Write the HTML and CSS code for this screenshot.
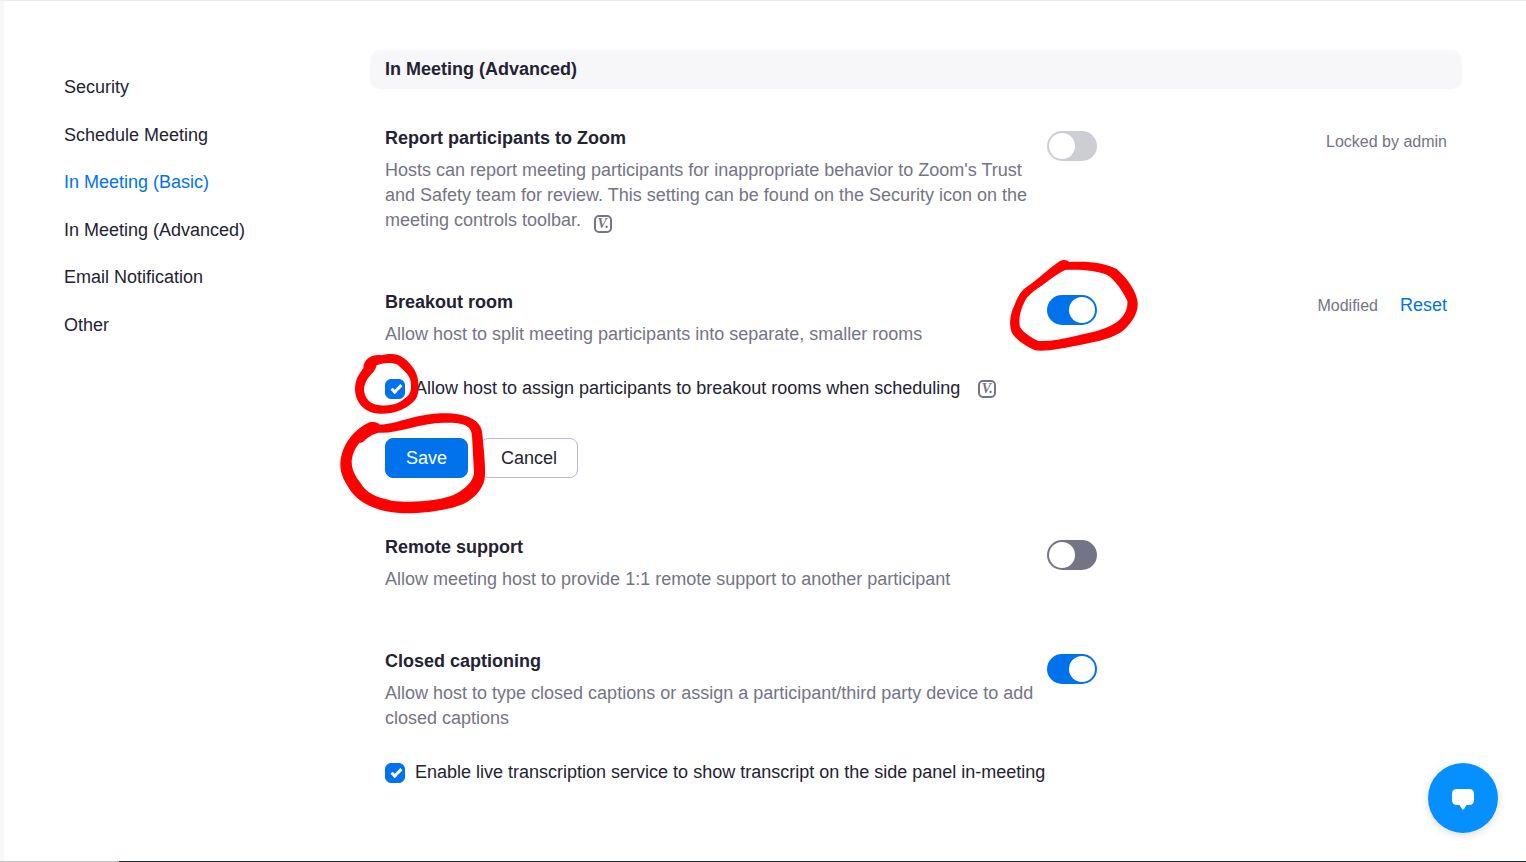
FILE: index.html
```html
<!DOCTYPE html>
<html lang="en">
<head>
<meta charset="utf-8">
<title>Meeting settings</title>
<meta name="viewport" content="width=device-width, initial-scale=1">
<link rel="stylesheet" href="styles.css">
</head>
<body>
<div class="page">
  <div class="content">
    <nav class="side-nav" aria-label="Settings sections">
      <a href="#security">Security</a>
      <a href="#schedule">Schedule Meeting</a>
      <a href="#basic" class="active">In Meeting (Basic)</a>
      <a href="#advanced">In Meeting (Advanced)</a>
      <a href="#email">Email Notification</a>
      <a href="#other">Other</a>
    </nav>
    <main class="settings">
      <h2 class="group-title" id="advanced">In Meeting (Advanced)</h2>

      <section class="setting">
        <div class="details">
          <h3 id="report-label">Report participants to Zoom</h3>
          <p class="description">Hosts can report meeting participants for inappropriate behavior to Zoom's Trust and Safety team for review. This setting can be found on the Security icon on the meeting controls toolbar. <button class="version" type="button" aria-label="Version requirements">V.</button></p>
        </div>
        <span class="switch-wrap"><input class="switch" type="checkbox" role="switch" aria-labelledby="report-label" disabled></span>
        <div class="status"><span>Locked by admin</span></div>
      </section>

      <section class="setting">
        <div class="details">
          <h3 id="breakout-label">Breakout room</h3>
          <p class="description">Allow host to split meeting participants into separate, smaller rooms</p>
          <div class="option">
            <span class="check-wrap">
              <input class="check" type="checkbox" id="assign" checked>
              <svg class="mark mark-check" viewBox="0 0 840 240" aria-hidden="true"><path d="M100 85C100 55 130 42 155 46C180 40 200 41 215 50C240 65 262 95 264 120C268 150 266 175 245 190C220 212 190 222 150 221C110 220 78 195 75 150C75 120 85 105 100 85ZM140 76C165 66 190 68 203 74C220 90 240 105 242 125C246 150 240 165 225 175C200 195 180 198 150 196C120 194 104 175 102 150C102 125 120 106 130 96Q138 86 140 76Z"/></svg>
            </span>
            <label for="assign">Allow host to assign participants to breakout rooms when scheduling</label>
            <button class="version" type="button" aria-label="Version requirements">V.</button>
          </div>
          <div class="actions">
            <span class="save-wrap">
              <button class="btn primary" type="button">Save</button>
              <svg class="mark mark-save" viewBox="0 0 840 570" aria-hidden="true"><path d="M118 250C135 246 146 252 150 257C200 256 245 228 330 223C400 220 455 238 457 285C462 340 466 370 465 405C466 440 440 475 400 495C350 515 280 524 215 523C150 518 100 502 65 460C45 430 30 405 31 375C33 325 65 275 118 250ZM145 281C200 285 270 252 340 251C400 250 424 258 426 290L432 400C432 430 395 460 360 472C310 488 240 492 185 485C140 475 110 465 90 430C72 405 65 390 65 365C68 340 80 320 89 311C105 312 106 292 145 281Z"/></svg>
            </span>
            <button class="btn" type="button">Cancel</button>
          </div>
        </div>
        <span class="switch-wrap">
          <input class="switch" type="checkbox" role="switch" aria-labelledby="breakout-label" checked>
          <svg class="mark mark-switch" viewBox="0 0 450 330" aria-hidden="true"><path d="M180 36C190 30 205 33 207 39C260 35 320 42 350 60C385 90 410 130 413 160C415 190 400 215 375 240C340 270 300 275 240 288C190 298 140 308 105 304C75 290 45 270 35 250C25 220 32 190 45 165C55 135 70 120 85 110C110 95 150 55 180 36ZM195 63C240 60 290 65 320 77C345 90 370 130 382 155C384 180 375 200 350 220C320 240 280 250 230 260C190 270 150 278 115 276C90 265 70 250 60 235C55 210 60 185 75 155C90 130 120 115 135 103C155 88 175 72 195 63Z"/></svg>
        </span>
        <div class="status"><span>Modified</span><a href="#reset">Reset</a></div>
      </section>

      <section class="setting">
        <div class="details">
          <h3 id="remote-label">Remote support</h3>
          <p class="description">Allow meeting host to provide 1:1 remote support to another participant</p>
        </div>
        <span class="switch-wrap"><input class="switch" type="checkbox" role="switch" aria-labelledby="remote-label"></span>
      </section>

      <section class="setting">
        <div class="details">
          <h3 id="caption-label">Closed captioning</h3>
          <p class="description">Allow host to type closed captions or assign a participant/third party device to add closed captions</p>
          <div class="option">
            <span class="check-wrap"><input class="check" type="checkbox" id="transcript" checked></span>
            <label for="transcript">Enable live transcription service to show transcript on the side panel in-meeting</label>
          </div>
        </div>
        <span class="switch-wrap"><input class="switch" type="checkbox" role="switch" aria-labelledby="caption-label" checked></span>
      </section>
    </main>
  </div>
  <footer class="page-edge"></footer>
</div>
<button class="chat" type="button" aria-label="Open chat">
  <svg viewBox="0 0 24 22" aria-hidden="true"><path d="M6 0H18Q23 0 23 5V11Q23 16 18 16H15.500L13 20Q12 21.500 11 20L8.500 16H6Q1 16 1 11V5Q1 0 6 0Z"/></svg>
</button>
</body>
</html>
```
FILE: styles.css
```css
* { box-sizing: border-box; }

body {
  margin: 0;
  background: #fff;
  color: #232333;
  font: 18px/25px "Liberation Sans", Arial, sans-serif;
}

h2, h3, p { margin: 0; font-size: inherit; }
button, input { font: inherit; margin: 0; }
a { color: #0073ec; text-decoration: none; }

.page {
  display: flex;
  flex-direction: column;
  min-height: 100vh;
  border-top: 1px solid #ebebed;
}

.content {
  flex: 1;
  display: flex;
  padding: 49px 64px 0 60px;
  border-left: 4px solid #f7f7fa;
}

.side-nav {
  flex: 0 0 306px;
  display: grid;
  grid-auto-rows: 1fr;
  align-items: center;
  align-self: flex-start;
  height: 285px;
  margin-top: 14px;
}
.side-nav a { color: #232333; justify-self: start; }
.side-nav .active { color: #0073ec; }

.settings { flex: 1; min-width: 0; }

.group-title {
  padding: 7px 15px;
  background: #f7f7fa;
  border-radius: 10px;
  margin-bottom: 37px;
}

.setting {
  display: grid;
  grid-template-columns: minmax(0, 1fr) 50px 350px;
  align-items: start;
  padding: 0 15px;
  margin-bottom: 57px;
}

.setting h3 { margin-bottom: 7px; }
.description { color: #747487; padding-right: 8px; }

.option {
  display: flex;
  align-items: center;
  gap: 10px;
  margin-top: 29px;
}

.version {
  width: 18px;
  height: 18px;
  padding: 0;
  border: 2px solid #747487;
  border-radius: 5px;
  background: #fff;
  color: #747487;
  font: italic bold 14px/14px "Liberation Serif", serif;
  text-align: center;
}
.description .version { margin-left: 8px; vertical-align: -2px; }
.option .version { margin-left: 8px; }

.check-wrap, .switch-wrap, .save-wrap { position: relative; display: flex; }

.check {
  appearance: none;
  width: 20px;
  height: 20px;
  border: 1px solid #747487;
  border-radius: 6px;
  display: grid;
  place-items: center;
}
.check:checked { background: #0073ec; border-color: #0073ec; }
.check:checked::before {
  content: "";
  width: 8px;
  height: 3px;
  border: solid #fff;
  border-width: 0 0 3px 3px;
  transform: translate(1px, -1px) rotate(-45deg);
}

.switch-wrap { margin-top: 5px; }
.switch {
  appearance: none;
  width: 50px;
  height: 30px;
  padding: 0 2px;
  border-radius: 15px;
  background: #747487;
  display: flex;
  align-items: center;
}
.switch::before {
  content: "";
  width: 26px;
  height: 26px;
  border-radius: 50%;
  background: #fff;
}
.switch:checked { background: #0073ec; justify-content: flex-end; }
.switch:disabled { background: #cdcdd4; }

.status {
  display: flex;
  justify-content: flex-end;
  align-items: baseline;
  gap: 22px;
  padding-top: 3px;
  color: #747487;
  font-size: 16px;
}
.status a { font-size: 18px; }

.actions { display: flex; gap: 12px; margin-top: 37px; }
.btn {
  height: 40px;
  padding: 0 20px;
  border: 1px solid #babacc;
  border-radius: 8px;
  background: #fff;
  color: #232333;
}
.btn.primary { background: #0073ec; border-color: #0073ec; color: #fff; }

/* Hand-drawn highlights over the controls */
.mark {
  position: absolute;
  z-index: 1;
  fill: #f00;
  fill-rule: evenodd;
  pointer-events: none;
}
.mark-check { left: -55px; top: -39px; width: 280px; height: 80px; }
.mark-save { left: -55px; top: -99px; width: 280px; height: 190px; }
.mark-switch { left: -47px; top: -46px; width: 150px; height: 110px; }

.page-edge {
  height: 1px;
  background: linear-gradient(to right, #c1c1c1 119px, #232d36 119px);
}

.chat {
  position: fixed;
  right: 28px;
  bottom: 29px;
  width: 70px;
  height: 70px;
  padding: 3px 0 0;
  border: 0;
  border-radius: 50%;
  background: #068fff;
  box-shadow: 0 2px 8px rgba(0, 0, 0, 0.15);
  display: grid;
  place-items: center;
}
.chat svg { width: 24px; height: 22px; fill: #fff; }
```
